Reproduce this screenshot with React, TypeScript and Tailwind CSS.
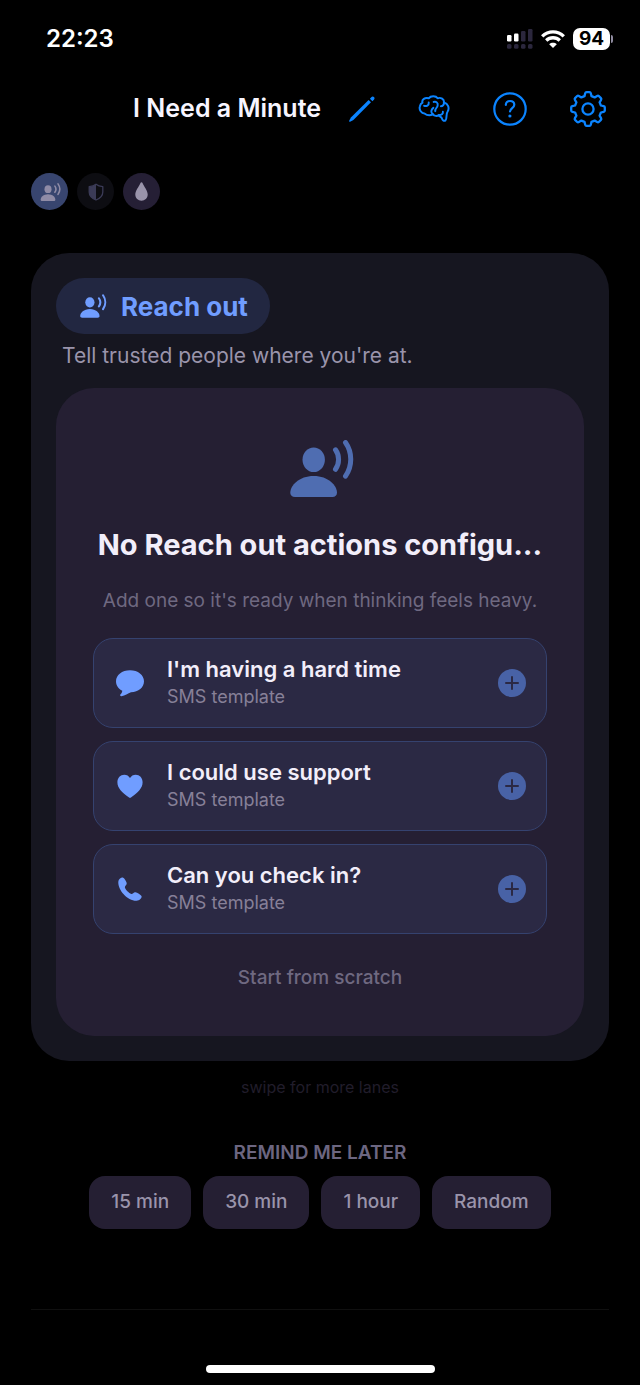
import type { ReactNode } from 'react';
import { clsx } from 'clsx';

interface IconProps {
  className?: string;
}

interface Template {
  title: string;
  detail: string;
  icon: ReactNode;
}

const PersonWave = ({ className }: IconProps) => (
  <svg className={className} viewBox="-5 0 70 57" fill="none" aria-hidden="true">
    <ellipse cx="23.7" cy="19.7" rx="11.2" ry="12.3" fill="currentColor" />
    <path
      d="M5 57C2 57 .3 55.5 .3 52.8C.3 45.5 9 36 23.7 36S47 45.5 47 52.8C47 55.5 45.3 57 42.3 57Z"
      fill="currentColor"
    />
    <path
      d="M45.5 9.8C49.6 15.5 49.6 23.5 45.5 29.3M55.500 2.500C62.5 12.5 62.5 26 55.5 36.2"
      stroke="currentColor"
      strokeWidth="5"
      strokeLinecap="round"
    />
  </svg>
);

const ShieldIcon = ({ className }: IconProps) => (
  <svg className={className} viewBox="0 0 16 18" fill="none" aria-hidden="true">
    <path
      d="M8 1.2C9.8 2.7 12 3.4 14.8 3.6V9C14.8 12.7 12.3 15.3 8 17C3.7 15.3 1.2 12.7 1.2 9V3.6C4 3.4 6.2 2.7 8 1.2Z"
      stroke="currentColor"
      strokeWidth="1.3"
      strokeLinejoin="round"
    />
    <path d="M8 1.2V17C3.7 15.3 1.2 12.7 1.2 9V3.6C4 3.4 6.2 2.7 8 1.2Z" fill="currentColor" />
  </svg>
);

const DropIcon = ({ className }: IconProps) => (
  <svg className={className} viewBox="0 0 13 19" fill="currentColor" aria-hidden="true">
    <path d="M6.5 .3C7 .3 7.3 .6 7.5 1C9.3 4.8 12.7 9 12.7 12.6C12.7 16.2 10 18.7 6.5 18.7S.3 16.2 .3 12.6C.3 9 3.7 4.8 5.5 1C5.7 .6 6 .3 6.5 .3Z" />
  </svg>
);

const PencilIcon = ({ className }: IconProps) => (
  <svg className={className} viewBox="0 0 27 28" fill="currentColor" aria-hidden="true">
    <path d="M20.6 4.9L23 7.3L5.4 24.9L2.1 26.7C1.5 27 .9 26.4 1.2 25.8L2.9 22.4Z" />
    <path d="M21.9 3.7L23.3 2.2C24.1 1.3 25.2 1.3 26 2.1S26.700 4 25.9 4.8L24.4 6.2Z" />
  </svg>
);

const BrainIcon = ({ className }: IconProps) => (
  <svg
    className={className}
    viewBox="266 43 96 82"
    fill="none"
    stroke="currentColor"
    strokeWidth="6"
    strokeLinecap="round"
    strokeLinejoin="round"
    aria-hidden="true"
  >
    <path d="M279 66C276 57 287 49 298 53C304 45 320 45 325 53C334 49 346 56 344 66C357 69 362 83 355 94C350 101 354 115 349 120C344 124 339 119 338 114C337 109 331 110 329 104C323 108 315 107 311 102C301 106 290 103 285 99C276 99 268 88 271 78C272 72 275 68 279 66Z" />
    <path d="M284 76C291 78 299 75 298 66M311 102C303 97 305 87 312 82M313 64C320 61 327 67 325 75C324 82 316 85 318 92M344 66C345 73 340 77 335 77M329 104C337 104 342 100 341 94" />
  </svg>
);

const HelpIcon = ({ className }: IconProps) => (
  <svg className={className} viewBox="0 0 34 34" fill="none" stroke="currentColor" aria-hidden="true">
    <circle cx="17" cy="17" r="15.7" strokeWidth="2.2" />
    <path
      d="M12.8 12.8C13 10.200 14.6 9 17 9C19.5 9 21.3 10.5 21.3 12.7C21.3 15.9 17 16.2 17 19.5"
      strokeWidth="2.2"
      strokeLinecap="round"
    />
    <circle cx="16.9" cy="24" r="1.6" fill="currentColor" stroke="none" />
  </svg>
);

const TOOTH_ANGLES = [0, 45, 90, 135, 180, 225, 270, 315];

const toothPath = (angle: number, index: number) => {
  const rad = (angle * Math.PI) / 180;
  const at = (x: number, y: number) =>
    `${(x * Math.cos(rad) - y * Math.sin(rad)).toFixed(2)} ${(x * Math.sin(rad) + y * Math.cos(rad)).toFixed(2)}`;
  return [
    `${index === 0 ? 'M' : 'L'}${at(-3.5, -12.9)}`,
    `L${at(-2.8, -15.7)}`,
    `Q${at(-2.5, -16.8)} ${at(-1.5, -16.8)}`,
    `L${at(1.5, -16.8)}`,
    `Q${at(2.5, -16.8)} ${at(2.8, -15.7)}`,
    `L${at(3.5, -12.9)}`,
  ].join('');
};

const GearIcon = ({ className }: IconProps) => (
  <svg className={className} viewBox="-18 -18 36 36" fill="none" stroke="currentColor" strokeWidth="2.3" aria-hidden="true">
    <path d={`${TOOTH_ANGLES.map(toothPath).join('')}Z`} strokeLinejoin="round" />
    <circle r="5.6" />
  </svg>
);

const BubbleIcon = () => (
  <svg className="h-7 w-7" viewBox="0 0 28 28" fill="currentColor" aria-hidden="true">
    <path d="M14 1.2C22 1.2 28 6 28 12.3S22.5 23 15 23.3C12 24.5 9 26.7 5.5 27.2C4.2 27.3 3.7 26.3 4.5 25.3C5.3 24.4 6 23.5 6.3 21.7C2.3 19.9 0 16.5 0 12.3C0 6 6 1.2 14 1.2Z" />
  </svg>
);

const HeartIcon = () => (
  <svg className="h-7 w-7" viewBox="0 0 28 28" fill="currentColor" aria-hidden="true">
    <path d="M14 25.8C13.5 25.8 13.1 25.5 12.7 25.2C6 20.7 1.4 16 1.4 10.2C1.4 5.8 4.4 2.7 8.3 2.7C10.7 2.7 12.8 3.9 14 6C15.2 3.9 17.3 2.7 19.7 2.7C23.6 2.7 26.6 5.8 26.6 10.2C26.6 16 22 20.7 15.3 25.2C14.9 25.5 14.5 25.8 14 25.8Z" />
  </svg>
);

const PhoneIcon = () => (
  <svg className="h-7 w-7" viewBox="0 0 28 28" fill="currentColor" aria-hidden="true">
    <path d="M2.3 6.8C2.5 4.2 5.2 2.2 7.2 2.7C8.5 3.2 10.2 6.3 10.7 8C11.2 9.8 8.7 11 8.9 12.4C9.3 14.5 13 18 15.3 18.9C16.7 19.3 17.7 16.8 19.4 17.2C21.3 17.7 24.7 19.7 25.5 21C26.3 22.9 23.5 25.6 20.6 25.8C11.5 26 1.8 15.2 2.3 6.8Z" />
  </svg>
);

const SignalIcon = () => (
  <svg className="h-5 w-[26px]" viewBox="0 0 26 20" aria-hidden="true">
    <g fill="#fff">
      <rect x="0" y="6" width="4.5" height="6.5" rx="1.2" />
      <rect x="7" y="4.5" width="4.5" height="8" rx="1.2" />
    </g>
    <g fill="#2b273d">
      <rect x="14" y="2" width="4.5" height="10.5" rx="1.2" />
      <rect x="21" y="0" width="4.5" height="12.5" rx="1.2" />
      <rect x="0" y="15" width="4.5" height="4.7" rx="1.5" />
      <rect x="7" y="15" width="4.5" height="4.7" rx="1.5" />
      <rect x="14" y="15" width="4.5" height="4.7" rx="1.5" />
      <rect x="21" y="15" width="4.5" height="4.7" rx="1.5" />
    </g>
  </svg>
);

const WifiIcon = () => (
  <svg className="h-[18px] w-6" viewBox="0 0 24 18" fill="none" stroke="#fff" strokeWidth="3.3" aria-hidden="true">
    <path d="M1.2 6.4C7.3 .3 16.7 .3 22.8 6.4M5.2 10.5C9 6.8 15 6.8 18.8 10.5" />
    <path d="M12 18L8.2 14.2C10.3 12.3 13.7 12.3 15.8 14.2Z" fill="#fff" stroke="none" />
  </svg>
);

const templates: Template[] = [
  { title: "I'm having a hard time", detail: 'SMS template', icon: <BubbleIcon /> },
  { title: 'I could use support', detail: 'SMS template', icon: <HeartIcon /> },
  { title: 'Can you check in?', detail: 'SMS template', icon: <PhoneIcon /> },
];

const lanes = [
  { label: 'Reach out', color: 'bg-[#38456f] text-[#8f8ba6]', icon: <PersonWave className="h-[18px] w-[22px]" /> },
  { label: 'Protect', color: 'bg-[#0d0d12] text-[#3b3b57]', icon: <ShieldIcon className="h-[18px] w-4" /> },
  { label: 'Soothe', color: 'bg-[#251f35] text-[#9a94ab]', icon: <DropIcon className="h-[19px] w-[13px]" /> },
];

const reminders = ['15 min', '30 min', '1 hour', 'Random'];

const StatusBar = () => (
  <div className="flex h-[77px] items-center justify-between pr-[27px] pl-[46px]">
    <span className="text-2xl font-semibold text-white">22:23</span>
    <div className="flex items-center gap-2">
      <SignalIcon />
      <WifiIcon />
      <div className="flex items-center gap-px">
        <span className="flex h-[22px] w-[37px] items-center justify-center rounded-[7px] bg-white text-[19px] leading-6 font-bold text-black">
          94
        </span>
        <span className="h-2 w-[2px] rounded-r-full bg-[#8f8ba0]" />
      </div>
    </div>
  </div>
);

const Header = () => (
  <header className="flex h-[63px] items-center justify-end gap-[27px] pr-[34px]">
    <h1 className="text-[25px] font-semibold text-[#f7f5ff]">I Need a Minute</h1>
    <nav className="flex items-center gap-[43px] text-[#0b84ff]">
      <button type="button" aria-label="Edit">
        <PencilIcon className="h-7 w-[27px]" />
      </button>
      <button type="button" aria-label="Insights">
        <BrainIcon className="h-[27px] w-8" />
      </button>
      <button type="button" aria-label="Help">
        <HelpIcon className="h-[34px] w-[34px]" />
      </button>
      <button type="button" aria-label="Settings">
        <GearIcon className="h-9 w-9" />
      </button>
    </nav>
  </header>
);

const TemplateRow = ({ title, detail, icon }: Template) => (
  <button
    type="button"
    className="flex h-[90px] w-full items-center rounded-[20px] border border-[#35426f] bg-[#2b2944] px-5 text-left"
  >
    <span className="flex w-8 justify-center text-[#709dff]">{icon}</span>
    <span className="ml-[21px] flex flex-1 flex-col">
      <span className="text-[22px] leading-7 font-semibold text-[#f2eefa]">{title}</span>
      <span className="text-[18px] leading-7 text-[#878098]">{detail}</span>
    </span>
    <svg className="h-7 w-7" viewBox="0 0 28 28" aria-hidden="true">
      <circle cx="14" cy="14" r="14" fill="#4862a6" />
      <path d="M14 8V20M8 14H20" stroke="#2b2944" strokeWidth="2" strokeLinecap="round" />
    </svg>
  </button>
);

export default function App() {
  return (
    <div className="flex min-h-screen flex-col bg-black font-['Inter','Liberation_Sans',sans-serif]">
      <StatusBar />
      <Header />

      <main className="flex flex-col px-[31px]">
        <div className="mt-[33px] flex gap-[9px]">
          {lanes.map((lane) => (
            <button
              key={lane.label}
              type="button"
              aria-label={lane.label}
              className={clsx('flex h-[37px] w-[37px] items-center justify-center rounded-full', lane.color)}
            >
              {lane.icon}
            </button>
          ))}
        </div>

        <section className="mt-[43px] rounded-[38px] bg-[#161620] px-[25px] py-[25px]">
          <h2 className="inline-flex h-14 items-center gap-[14px] rounded-full bg-[#222741] px-[22px] text-[26px] font-bold text-[#709dff]">
            <PersonWave className="h-6 w-[29px]" />
            Reach out
          </h2>
          <p className="mt-2 pl-[6px] text-[21px] leading-7 text-[#9a94ab]">Tell trusted people where you're at.</p>

          <div className="mt-[18px] flex flex-col items-center rounded-[38px] bg-[#251f33] px-[37px] pt-[52px] pb-[44px]">
            <PersonWave className="h-[57px] w-[70px] text-[#4f6db1]" />
            <h3 className="mt-7 text-[29px] leading-10 font-bold whitespace-nowrap text-[#f2eefa]">
              No Reach out actions configu...
            </h3>
            <p className="mt-[22px] text-[19px] leading-7 whitespace-nowrap text-[#6f6981]">
              Add one so it's ready when thinking feels heavy.
            </p>

            <div className="mt-[23px] flex w-full flex-col gap-[13px]">
              {templates.map((template) => (
                <TemplateRow key={template.title} {...template} />
              ))}
            </div>

            <button type="button" className="mt-[30px] text-[19px] leading-7 font-medium text-[#6f6981]">
              Start from scratch
            </button>
          </div>
        </section>

        <p className="mt-[14px] text-center text-[16px] leading-6 text-[#211d2b]">swipe for more lanes</p>

        <section className="mt-10 flex flex-col items-center">
          <h2 className="text-[19px] leading-7 font-semibold text-[#6c6681]">REMIND ME LATER</h2>
          <div className="mt-[9px] flex gap-3">
            {reminders.map((reminder) => (
              <button
                key={reminder}
                type="button"
                className="h-[53px] rounded-2xl bg-[#251f33] px-[22px] text-[19px] font-medium text-[#9a94ab]"
              >
                {reminder}
              </button>
            ))}
          </div>
        </section>

        <hr className="mt-20 border-[#101010]" />
      </main>

      <div className="mt-auto flex justify-center pb-3">
        <div className="h-2 w-[229px] rounded-full bg-white" />
      </div>
    </div>
  );
}
